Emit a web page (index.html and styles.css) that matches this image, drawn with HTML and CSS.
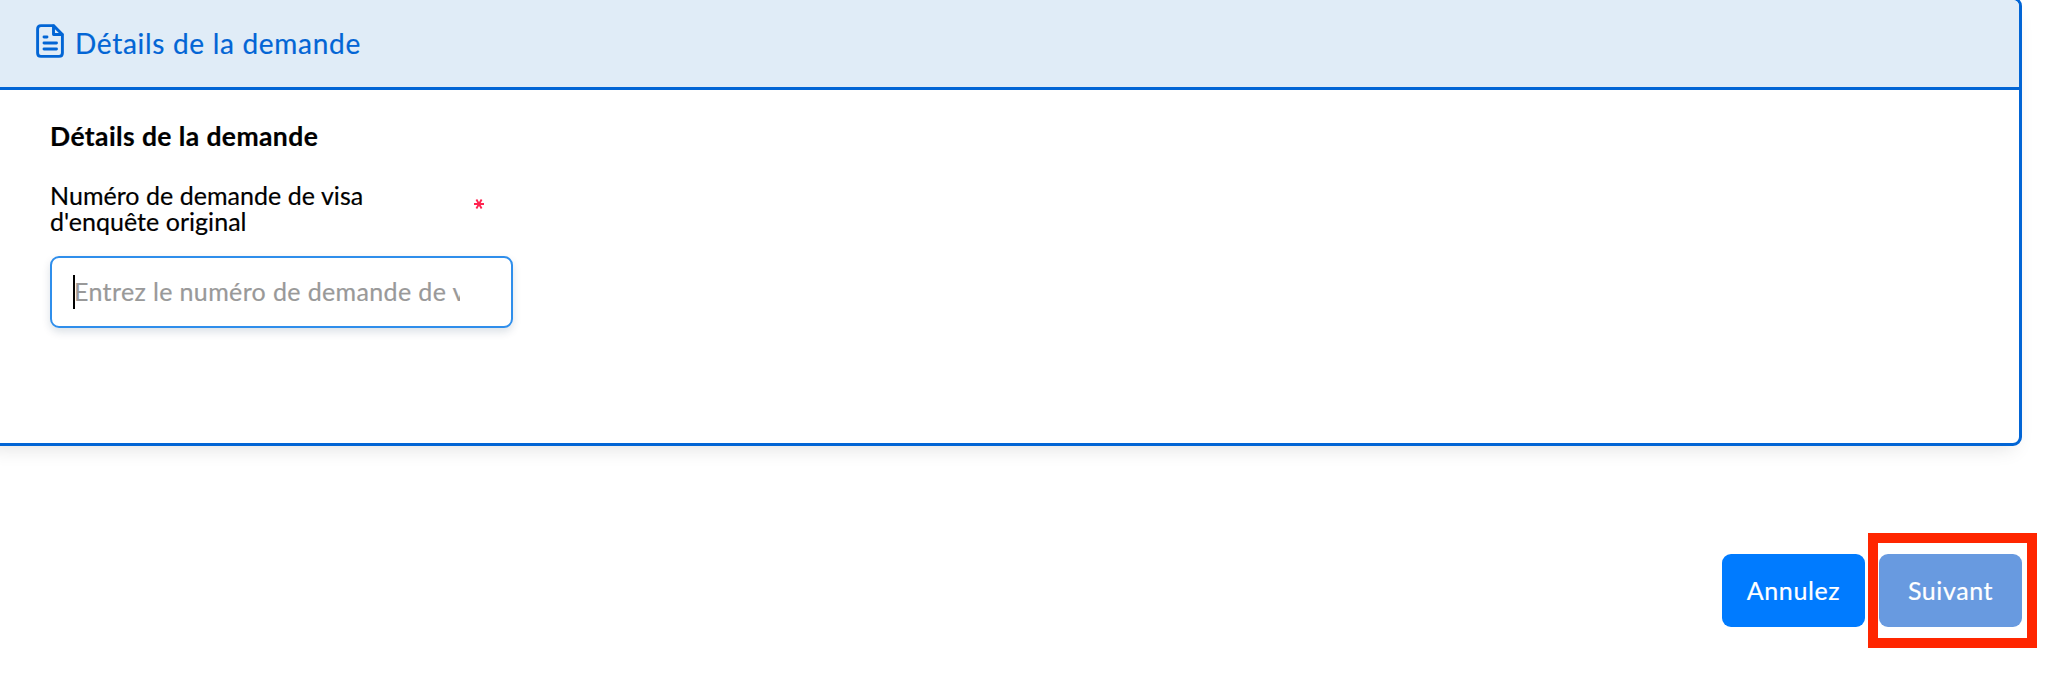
FILE: index.html
```html
<!DOCTYPE html>
<html lang="fr">
<head>
    <meta charset="UTF-8">
    <meta name="viewport" content="width=device-width, initial-scale=1.0">
    <title>Détails de la demande</title>
    <link rel="stylesheet" href="styles.css">
</head>
<body>
    <section class="card">
        <header class="card-header">
            <svg class="card-icon" width="28" height="34" viewBox="0 0 28 34" fill="none" stroke="currentColor" stroke-width="2.9" stroke-linejoin="round" stroke-linecap="round">
                <path d="M17.5 1.6H5Q1.6 1.6 1.6 5V29Q1.6 32.4 5 32.4H23Q26.4 32.4 26.4 29V10.5Z"/>
                <path d="M17.5 2V10.5H26"/>
                <path d="M8 13H11M8 19H20.5M8 25H20.5"/>
            </svg>
            <span class="card-title">Détails de la demande</span>
        </header>

        <div class="card-body">
            <h2 class="subtitle">Détails de la demande</h2>

            <!-- Champ obligatoire -->
            <div class="field">
                <div class="field-head">
                    <label class="field-label" for="numero">Numéro de demande de visa<br>d'enquête original</label>
                    <svg class="required" width="12" height="12" viewBox="0 0 12 12" fill="none" stroke="currentColor" stroke-width="1.9">
                        <path d="M1 6H11M3.4 1.6L8.6 10.4M8.6 1.6L3.4 10.4"/>
                    </svg>
                </div>
                <div class="field-box">
                    <input class="field-input" type="text" id="numero" placeholder="Entrez le numéro de demande de visa">
                    <span class="caret"></span>
                </div>
            </div>
        </div>
    </section>

    <!-- Boutons de navigation -->
    <div class="actions">
        <button class="btn btn-cancel">Annulez</button>
        <div class="highlight">
            <button class="btn btn-next">Suivant</button>
        </div>
    </div>
</body>
</html>
```

FILE: styles.css
```css
* {
    box-sizing: border-box;
}

body {
    margin: 0;
    height: 677px;
    overflow: hidden;
    background-color: #fff;
    color: #000;
    font-family: Lato, "Open Sans", sans-serif;
    -webkit-text-stroke: 0.2px;
}

.card {
    width: 2042px;
    height: 449px;
    margin: -3px 0 0 -20px;
    border: 3px solid #0265d5;
    border-radius: 9px;
    background-color: #fff;
    box-shadow: 0 10px 20px -8px rgba(0, 0, 0, 0.12);
    overflow: hidden;
}

.card-header {
    display: flex;
    align-items: center;
    height: 90px;
    padding: 0 0 5px 53px;
    border-bottom: 3px solid #0265d5;
    background-color: #e0ecf7;
    color: #0265d5;
}

.card-title {
    margin: 3px 0 0 11px;
    font-size: 28px;
    line-height: 34px;
    letter-spacing: 0.7px;
}

.card-body {
    padding: 29px 0 0 67px;
}

.subtitle {
    margin: 0;
    font-size: 26.5px;
    line-height: 34px;
    font-weight: 700;
    letter-spacing: 0.4px;
}

.field {
    width: 463px;
    margin-top: 29px;
}

.field-head {
    display: flex;
    justify-content: space-between;
    padding-right: 28px;
}

.field-label {
    font-size: 25px;
    line-height: 26px;
    letter-spacing: 0.04px;
}

.required {
    margin-top: 16px;
    color: #ff2450;
}

.field-box {
    position: relative;
    height: 72px;
    margin-top: 22px;
    padding: 0 51px 0 22px;
    border: 2px solid #2f8eeb;
    border-radius: 9px;
    box-shadow: 0 4px 8px rgba(0, 40, 80, 0.14);
}

.field-input {
    display: block;
    width: 100%;
    height: 100%;
    padding: 0 0 2px;
    border: none;
    outline: none;
    background: none;
    font-family: inherit;
    font-size: 25px;
    letter-spacing: 0.37px;
}

.field-input::placeholder {
    color: #999;
}

.caret {
    position: absolute;
    top: 17px;
    left: 21px;
    width: 2px;
    height: 34px;
    background-color: #000;
}

.actions {
    display: flex;
    justify-content: flex-end;
    align-items: flex-start;
    gap: 3px;
    padding: 87px 11px 0 0;
}

.btn {
    width: 143px;
    height: 73px;
    padding: 0 0 2px;
    border: none;
    border-radius: 9px;
    color: #fff;
    font-family: inherit;
    font-size: 25px;
    letter-spacing: 0.6px;
    cursor: pointer;
}

.btn-cancel {
    margin-top: 21px;
    background-color: #007bff;
}

.highlight {
    width: 169px;
    height: 115px;
    padding: 11px 0 0 1px;
    border: 10px solid #ff2600;
}

.btn-next {
    background-color: #689ae0;
}
```
